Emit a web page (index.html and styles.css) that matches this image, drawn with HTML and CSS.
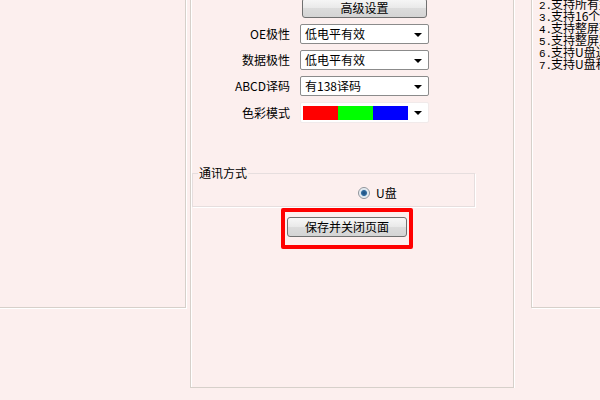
FILE: index.html
```html
<!DOCTYPE html>
<html lang="zh-CN">

<head>
    <meta charset="UTF-8">
    <title>参数设置</title>
    <link rel="stylesheet" href="styles.css">
</head>

<body>
    <div class="page">
        <div class="panel left-panel"></div>

        <div class="panel mid-panel">
            <div class="form">
                <span></span>
                <button class="btn adv-btn">高级设置</button>

                <label class="label">OE极性</label>
                <div class="select">低电平有效<i class="arrow"></i></div>

                <label class="label">数据极性</label>
                <div class="select">低电平有效<i class="arrow"></i></div>

                <label class="label">ABCD译码</label>
                <div class="select">有138译码<i class="arrow"></i></div>

                <label class="label">色彩模式</label>
                <div class="select color-select">
                    <span class="swatch red"></span><span class="swatch green"></span><span class="swatch blue"></span>
                    <i class="arrow"></i>
                </div>
            </div>

            <fieldset class="group">
                <legend class="group-title">通讯方式</legend>
                <div class="radio-row">
                    <span class="radio"></span>
                    <span>U盘</span>
                </div>
            </fieldset>

            <div class="save-box">
                <button class="btn save-btn">保存并关闭页面</button>
            </div>
        </div>

        <div class="panel right-panel">
            <div class="line"><span class="num">2.</span>支持所有型号单元板</div>
            <div class="line"><span class="num">3.</span>支持16个区域显示</div>
            <div class="line"><span class="num">4.</span>支持整屏亮度调节</div>
            <div class="line"><span class="num">5.</span>支持整屏定时开关</div>
            <div class="line"><span class="num">6.</span>支持U盘通讯</div>
            <div class="line"><span class="num">7.</span>支持U盘程序升级</div>
        </div>
    </div>
</body>

</html>
```

FILE: styles.css
```css
* {
    box-sizing: border-box;
}

body {
    margin: 0;
    background-color: #fcefee;
    overflow: hidden;
    font-family: "Noto Sans CJK SC", "Liberation Sans", sans-serif;
    font-size: 12px;
    line-height: 12px;
    color: #000;
}

.page {
    display: flex;
    align-items: flex-start;
    width: 700px;
    margin: -10px 0 0 -6px;
}

.panel {
    flex-shrink: 0;
    border: 1px solid #d6d0ca;
    box-shadow: 1px 1px 0 #fff, inset 1px 1px 0 #fff;
}

.left-panel {
    width: 192px;
    height: 318px;
}

.mid-panel {
    width: 324px;
    height: 398px;
    margin-left: 4px;
    padding-top: 7px;
}

.right-panel {
    width: 110px;
    height: 318px;
    margin-left: 17px;
    padding: 7px 0 0 7px;
    white-space: nowrap;
    overflow: hidden;
}

/* form rows */
.form {
    display: grid;
    grid-template-columns: 99px 129px;
    column-gap: 10px;
    row-gap: 6px;
    align-items: center;
}

.label {
    text-align: right;
}

.btn {
    font-family: inherit;
    font-size: 12px;
    line-height: 12px;
    color: #000;
    border: 1px solid #707070;
    border-radius: 3px;
    background: linear-gradient(#f7f7f7, #e9e9e9 50%, #dcdcdc 51%, #d4d4d4);
    padding: 0;
}

.adv-btn {
    width: 125px;
    height: 20px;
    margin-left: 2px;
}

.select {
    position: relative;
    height: 20px;
    padding: 3px 0 0 4px;
    background-color: #fff;
    border: 1px solid #8b8b8b;
    border-radius: 2px;
}

.arrow {
    position: absolute;
    right: 6px;
    top: 8px;
    width: 0;
    height: 0;
    border-left: 4px solid transparent;
    border-right: 4px solid transparent;
    border-top: 4px solid #000;
}

.color-select {
    display: flex;
    height: 21px;
    padding: 3px 0 0 2px;
    border-color: #f1eaea;
}

.swatch {
    width: 35px;
    height: 14px;
}

.red {
    background-color: #ff0000;
}

.green {
    background-color: #00ff00;
}

.blue {
    background-color: #0000ff;
}

/* communication group */
.group {
    width: 283px;
    margin: 44px 0 0 1px;
    padding: 0;
    border: 1px solid #e6dede;
    box-shadow: 1px 1px 0 #fff;
}

.group-title {
    margin-left: 5px;
    padding: 0 1px;
    line-height: 12px;
}

.radio-row {
    display: flex;
    align-items: center;
    gap: 6px;
    height: 27px;
    padding: 1px 0 0 165px;
}

.radio {
    width: 12px;
    height: 12px;
    border: 1px solid #8e949b;
    border-radius: 50%;
    background: radial-gradient(circle, #1d4f80 0, #2f6a9e 2.5px, #d8e4ee 3.5px, #f2f5f8 5px);
}

/* save button with red highlight */
.save-box {
    width: 132px;
    height: 41px;
    margin: 1px 0 0 90px;
    padding: 5px 2px 0 2px;
    border: 4px solid #f00;
    border-radius: 2px;
}

.save-btn {
    width: 120px;
    height: 20px;
}

.line {
    height: 12px;
}

.num {
    display: inline-block;
    width: 12px;
    font-family: "Liberation Mono", monospace;
    font-size: 11px;
}
```
